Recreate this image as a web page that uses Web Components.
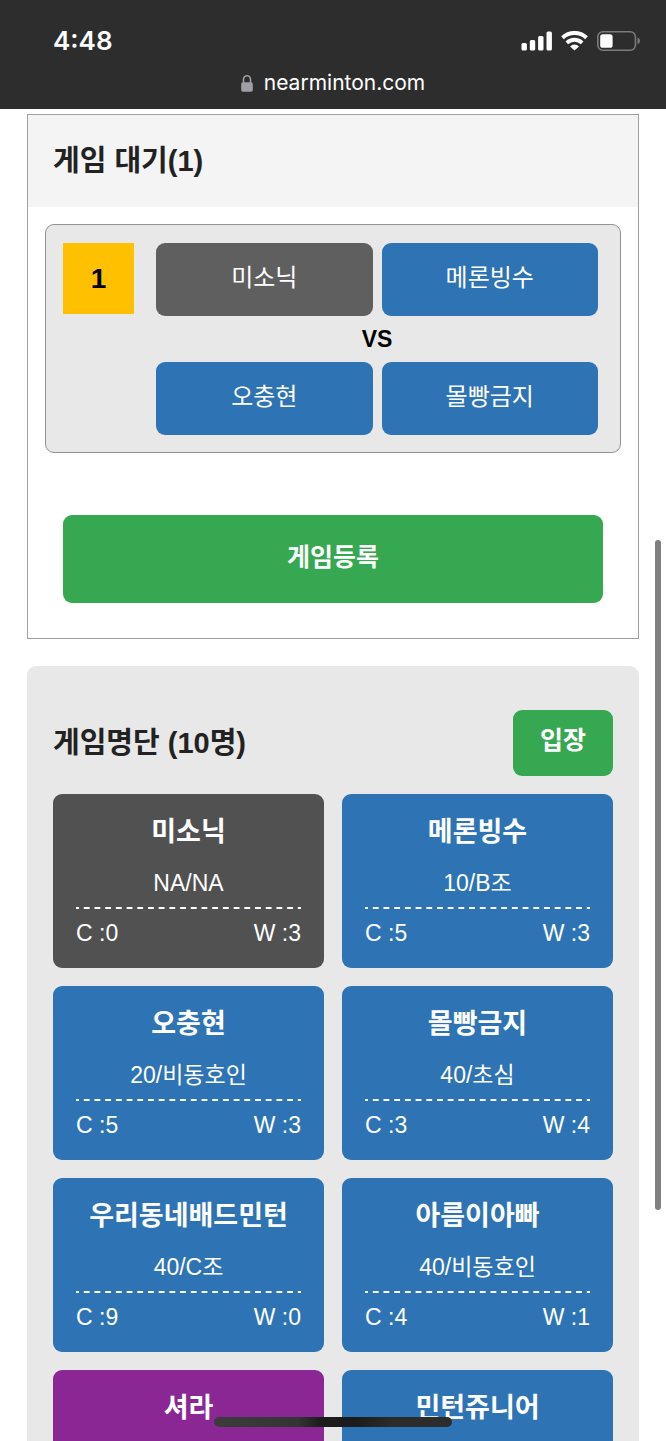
<!DOCTYPE html>
<html lang="ko">
<head>
<meta charset="utf-8">
<meta name="viewport" content="width=device-width, initial-scale=1">
<title>nearminton.com</title>
<style>
  html, body { margin: 0; height: 100%; }
  body { overflow: hidden; background: #fff; color: #222; font-family: "Liberation Sans", "Noto Sans CJK KR", sans-serif; }
</style>
</head>
<body>
<phone-screen>
  <status-bar slot="top" time="4:48" domain="nearminton.com"></status-bar>
  <waiting-panel heading="게임 대기(1)">
    <match-box number="1">
      <player-pill tone="gray">미소닉</player-pill>
      <player-pill>메론빙수</player-pill>
      <player-pill slot="rival">오충현</player-pill>
      <player-pill slot="rival">몰빵금지</player-pill>
    </match-box>
    <action-button slot="action" size="wide">게임등록</action-button>
  </waiting-panel>
  <roster-panel heading="게임명단 (10명)">
    <action-button slot="action">입장</action-button>
    <player-card tone="dark" name="미소닉" info="NA/NA" c="0" w="3"></player-card>
    <player-card name="메론빙수" info="10/B조" c="5" w="3"></player-card>
    <player-card name="오충현" info="20/비동호인" c="5" w="3"></player-card>
    <player-card name="몰빵금지" info="40/초심" c="3" w="4"></player-card>
    <player-card name="우리동네배드민턴" info="40/C조" c="9" w="0"></player-card>
    <player-card name="아름이아빠" info="40/비동호인" c="4" w="1"></player-card>
    <player-card tone="purple" name="셔라"></player-card>
    <player-card name="민턴쥬니어"></player-card>
  </roster-panel>
</phone-screen>

<script>
  class BaseElement extends HTMLElement {
    constructor() {
      super();
      this.attachShadow({ mode: "open" });
    }
    connectedCallback() {
      this.shadowRoot.innerHTML = this.render();
    }
    attr(name) {
      return this.getAttribute(name) || "";
    }
  }

  customElements.define("phone-screen", class extends BaseElement {
    render() {
      return `
        <style>
          :host { display: flex; flex-direction: column; height: 100vh; position: relative; overflow: hidden; }
          main { flex: 1; min-height: 0; overflow: hidden; padding: 5px 27px 0; display: flex; flex-direction: column; gap: 27px; }
          ::slotted(*) { flex: none; }
          .scroll { position: absolute; right: 5px; top: 37.5%; height: 46.5%; width: 6px; border-radius: 3px; background: #808080; }
          .home { position: absolute; left: 0; right: 0; bottom: 14px; margin: 0 auto; width: 238px; height: 10px; border-radius: 5px;
            background: linear-gradient(90deg, #3c3c3c, #353535 35%, #1c1c1c 45%, #1c1c1c 60%, #2c2c2c 75%, #2c2c2c); }
        </style>
        <slot name="top"></slot>
        <main><slot></slot></main>
        <div class="scroll"></div>
        <div class="home"></div>`;
    }
  });

  customElements.define("status-bar", class extends BaseElement {
    render() {
      return `
        <style>
          :host { display: block; background: #2d2d2d; color: #fff; font-family: Inter, sans-serif; }
          .row { display: flex; align-items: center; justify-content: space-between; padding: 24px 26px 0 53px; height: 34px; }
          .time { font-size: 26px; font-weight: 600; line-height: 34px; }
          .icons { display: flex; align-items: center; gap: 9px; }
          svg { display: block; }
          .address { display: flex; align-items: center; justify-content: center; gap: 11px; padding: 10px 0 11px; font-size: 21px; line-height: 30px; }
        </style>
        <div class="row">
          <span class="time">${this.attr("time")}</span>
          <span class="icons">
            <svg width="31" height="20" viewBox="0 0 31 20" fill="#fff" aria-hidden="true">
              <rect x="0.5" y="12" width="5.4" height="7.4" rx="1.5"/><rect x="8.8" y="9" width="5.4" height="10.4" rx="1.5"/>
              <rect x="17.1" y="5" width="5.4" height="14.4" rx="1.5"/><rect x="25.5" y="0.5" width="5.4" height="18.9" rx="1.5"/>
            </svg>
            <svg width="27" height="20" viewBox="0 0 27 20" aria-hidden="true">
              <path d="M1.5 6.7A17.5 17.5 0 0 1 25.5 6.7" fill="none" stroke="#fff" stroke-width="4"/>
              <path d="M5.8 11.8A11.3 11.3 0 0 1 21.2 11.8" fill="none" stroke="#fff" stroke-width="3.8"/>
              <path d="M13.5 19.6L9 15.4A6.5 6.5 0 0 1 18 15.4Z" fill="#fff"/>
            </svg>
            <svg width="43" height="20" viewBox="0 0 43 20" aria-hidden="true">
              <rect x="0.8" y="0.8" width="37.6" height="18.4" rx="5" fill="none" stroke="#7b7b7b" stroke-width="1.6"/>
              <rect x="3.2" y="3.2" width="12.4" height="13.6" rx="2.6" fill="#fff"/>
              <path d="M40.5 6.6Q43 7.6 43 10T40.5 13.4Z" fill="#7b7b7b"/>
            </svg>
          </span>
        </div>
        <div class="address">
          <svg width="12" height="17" viewBox="0 0 12 17" aria-hidden="true">
            <rect x="0.2" y="7.3" width="11.6" height="9.4" rx="1.8" fill="#a09fa5"/>
            <path d="M2.5 8V4.6a3.5 3.8 0 0 1 7 0V8" fill="none" stroke="#a09fa5" stroke-width="1.6"/>
          </svg>
          <span>${this.attr("domain")}</span>
        </div>`;
    }
  });

  customElements.define("waiting-panel", class extends BaseElement {
    render() {
      return `
        <style>
          :host { display: block; border: 1px solid #a0a0a0; background: #fff; }
          h2 { margin: 0; padding: 24px 25px; font-size: 29px; line-height: 44px; font-weight: 700; background: #f4f4f4; }
          .body { padding: 17px 17px 35px; }
          .action { padding: 62px 18px 0; }
        </style>
        <h2>${this.attr("heading")}</h2>
        <div class="body">
          <slot></slot>
          <div class="action"><slot name="action"></slot></div>
        </div>`;
    }
  });

  customElements.define("match-box", class extends BaseElement {
    render() {
      return `
        <style>
          :host { display: flex; align-items: flex-start; gap: 22px; padding: 18px 22px 17px 17px; border: 1px solid #929292; border-radius: 9px; background: #e8e8e8; color: #000; }
          .number { flex: none; width: 71px; font-size: 28px; line-height: 71px; font-weight: 700; text-align: center; background: #ffc000; }
          .teams { flex: 1; }
          .team { display: grid; grid-template-columns: 1fr 1fr; gap: 9px; }
          .vs { font-size: 23px; line-height: 46px; font-weight: 700; text-align: center; }
        </style>
        <div class="number">${this.attr("number")}</div>
        <div class="teams">
          <div class="team"><slot></slot></div>
          <div class="vs">VS</div>
          <div class="team"><slot name="rival"></slot></div>
        </div>`;
    }
  });

  customElements.define("player-pill", class extends BaseElement {
    render() {
      return `
        <style>
          :host { display: block; padding: 17px 0 20px; border-radius: 9px; background: #2e74b5; color: #fff; font-size: 24px; line-height: 36px; text-align: center; }
          :host([tone="gray"]) { background: #5f5f5f; }
        </style>
        <slot></slot>`;
    }
  });

  customElements.define("action-button", class extends BaseElement {
    render() {
      return `
        <style>
          :host { display: block; }
          button { display: block; width: 100%; margin: 0; padding: 12px 27px 18px; border: 0; border-radius: 9px; background: #36a852; color: #fff; font: 700 25px/36px "Liberation Sans", "Noto Sans CJK KR", sans-serif; cursor: pointer; }
          :host([size="wide"]) button { padding: 24px 27px 28px; }
        </style>
        <button type="button"><slot></slot></button>`;
    }
  });

  customElements.define("roster-panel", class extends BaseElement {
    render() {
      return `
        <style>
          :host { display: block; padding: 44px 26px; border-radius: 9px; background: #e8e8e8; }
          header { display: flex; align-items: center; justify-content: space-between; margin-bottom: 18px; }
          h2 { margin: 0; font-size: 29px; line-height: 44px; font-weight: 700; }
          .grid { display: grid; grid-template-columns: 1fr 1fr; gap: 18px; }
        </style>
        <header><h2>${this.attr("heading")}</h2><slot name="action"></slot></header>
        <div class="grid"><slot></slot></div>`;
    }
  });

  customElements.define("player-card", class extends BaseElement {
    render() {
      const details = this.hasAttribute("info") ? `
        <p class="info">${this.attr("info")}</p>
        <div class="line"></div>
        <div class="stats"><span>C :${this.attr("c")}</span><span>W :${this.attr("w")}</span></div>` : "";
      return `
        <style>
          :host { display: block; box-sizing: border-box; min-height: 174px; padding: 20px 23px 19px; border-radius: 9px; background: #2e74b5; color: #fff; text-align: center; }
          :host([tone="dark"]) { background: #515151; }
          :host([tone="purple"]) { background: #8a2795; }
          h3 { margin: 0; font-size: 27px; line-height: 36px; font-weight: 700; white-space: nowrap; }
          .info { margin: 17px 0 8px; font-size: 23px; line-height: 32px; }
          .line { height: 2px; background: linear-gradient(90deg, #fff 27%, transparent 27% 73%, #fff 73%) 0 0 / calc(100% / 21) 100%; }
          .stats { display: flex; justify-content: space-between; margin-top: 8px; font-size: 23px; line-height: 32px; }
        </style>
        <h3>${this.attr("name")}</h3>${details}`;
    }
  });
</script>
</body>
</html>
